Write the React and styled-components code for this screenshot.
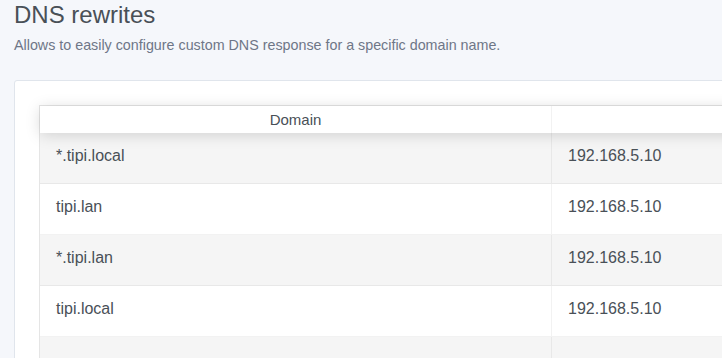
import styled, { createGlobalStyle } from 'styled-components';

const GlobalStyle = createGlobalStyle`
  body {
    margin: 0;
    background: #f5f7fb;
    font-family: "Liberation Sans", Arial, sans-serif;
    color: #495057;
    overflow: hidden;
  }
`;

const Page = styled.div`
  padding: 0 0 0 14px;
  width: 1200px;
`;

const Title = styled.h1`
  margin: 0;
  padding-top: 1px;
  font-size: 24px;
  font-weight: 400;
  line-height: 28px;
  color: #495057;
`;

const Subtitle = styled.p`
  margin: 6px 0 0;
  font-size: 14.3px;
  line-height: 20px;
  color: #6e7687;
`;

const Card = styled.div`
  margin-top: 25px;
  background: #fff;
  border: 1px solid #e0e5ec;
  border-radius: 3px;
  padding: 24px;
`;

const Table = styled.div`
  border: 1px solid rgba(0, 0, 0, 0.1);
  width: 1100px;
`;

const Head = styled.div`
  display: grid;
  grid-template-columns: 512px 1fr;
  box-shadow: 0 2px 15px 0 rgba(0, 0, 0, 0.15);
  position: relative;
  z-index: 1;
  background: #fff;
`;

const HeadCell = styled.div`
  height: 27px;
  display: flex;
  align-items: center;
  justify-content: center;
  font-size: 15px;
  color: #495057;
  border-right: ${p => (p.$last ? 'none' : '1px solid rgba(0, 0, 0, 0.05)')};
`;

const Row = styled.div`
  display: grid;
  grid-template-columns: 512px 1fr;
  background: ${p => (p.$odd ? '#f5f5f5' : '#fff')};
  border-bottom: 1px solid rgba(0, 0, 0, 0.05);
`;

const Cell = styled.div`
  height: 50px;
  box-sizing: border-box;
  display: flex;
  align-items: center;
  padding: 0 16px 5px;
  font-size: 16px;
  color: #495057;
  border-right: ${p => (p.$last ? 'none' : '1px solid rgba(0, 0, 0, 0.05)')};
`;

const rewrites = [
  { domain: '*.tipi.local', answer: '192.168.5.10' },
  { domain: 'tipi.lan', answer: '192.168.5.10' },
  { domain: '*.tipi.lan', answer: '192.168.5.10' },
  { domain: 'tipi.local', answer: '192.168.5.10' },
  { domain: '', answer: '' },
];

export default function App() {
  return (
    <>
      <GlobalStyle />
      <Page>
        <Title>DNS rewrites</Title>
        <Subtitle>Allows to easily configure custom DNS response for a specific domain name.</Subtitle>
        <Card>
          <Table>
            <Head>
              <HeadCell>Domain</HeadCell>
              <HeadCell $last>Answer</HeadCell>
            </Head>
            {rewrites.map((r, i) => (
              <Row key={i} $odd={i % 2 === 0}>
                <Cell>{r.domain}</Cell>
                <Cell $last>{r.answer}</Cell>
              </Row>
            ))}
          </Table>
        </Card>
      </Page>
    </>
  );
}
